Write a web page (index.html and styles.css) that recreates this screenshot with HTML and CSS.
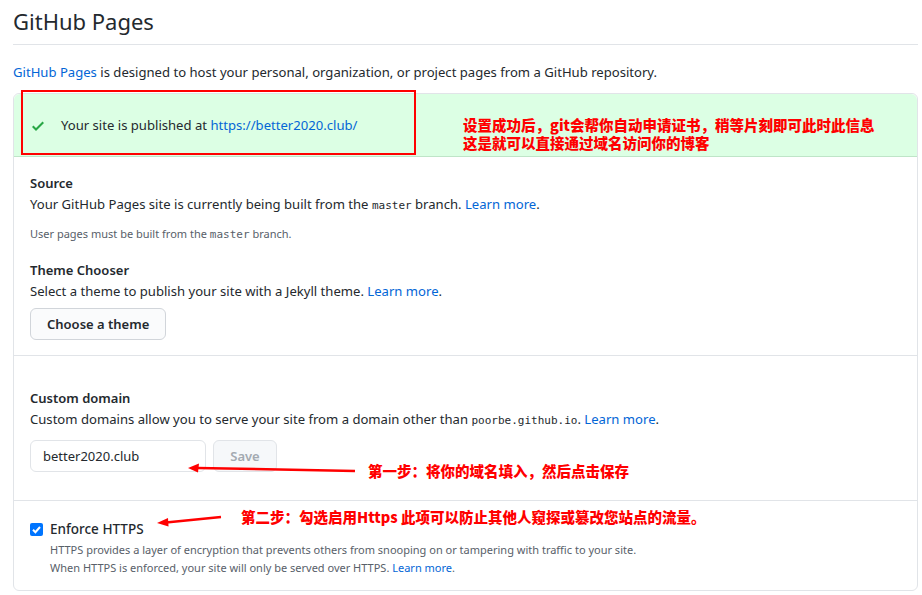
FILE: index.html
```html
<!DOCTYPE html>
<html lang="zh">
<head>
<meta charset="utf-8">
<title>GitHub Pages</title>
<link rel="stylesheet" href="styles.css">
</head>
<body>
<div class="page">
  <h2 class="title">GitHub Pages</h2>
  <p class="intro"><a href="#">GitHub Pages</a> is designed to host your personal, organization, or project pages from a GitHub repository.</p>

  <div class="box">
    <div class="flash">
      <svg class="check" width="12" height="16" viewBox="0 0 12 16"><path fill="#28a745" fill-rule="evenodd" d="M12 5l-8 8-4-4 1.5-1.5L4 10l6.5-6.5L12 5z"/></svg>
      <span>Your site is published at <a href="#">https://better2020.club/</a></span>
      <div class="redbox"></div>
      <div class="note note-flash">设置成功后，git会帮你自动申请证书，稍等片刻即可此时此信息<br>这是就可以直接通过域名访问你的博客</div>
    </div>

    <div class="section">
      <h4 class="sub">Source</h4>
      <p class="desc">Your GitHub Pages site is currently being built from the <code>master</code> branch. <a href="#">Learn more</a>.</p>
      <p class="small">User pages must be built from the <code>master</code> branch.</p>
      <h4 class="sub theme">Theme Chooser</h4>
      <p class="desc">Select a theme to publish your site with a Jekyll theme. <a href="#">Learn more</a>.</p>
      <button class="btn">Choose a theme</button>
    </div>

    <div class="section domain">
      <h4 class="sub">Custom domain</h4>
      <p class="desc">Custom domains allow you to serve your site from a domain other than <code>poorbe.github.io</code>. <a href="#">Learn more</a>.</p>
      <div class="row">
        <div class="input">better2020.club</div>
        <button class="btn save">Save</button>
      </div>
      <svg class="arrow arrow1" width="170" height="12" viewBox="0 0 170 12"><path d="M168 8 L10 5" stroke="#f00" stroke-width="2.5" fill="none"/><path d="M1 5 L12 0.5 L11 9.5 Z" fill="#f00"/></svg>
      <div class="note note1">第一步：将你的域名填入，然后点击保存</div>
    </div>

    <div class="section https">
      <div class="check-row">
        <span class="cb"><svg width="13" height="13" viewBox="0 0 13 13"><path d="M3 6.8 L5.4 9.2 L10 4" stroke="#fff" stroke-width="2" fill="none"/></svg></span>
        <span class="cb-label">Enforce HTTPS</span>
      </div>
      <p class="small hint">HTTPS provides a layer of encryption that prevents others from snooping on or tampering with traffic to your site.<br>When HTTPS is enforced, your site will only be served over HTTPS. <a href="#">Learn more</a>.</p>
      <svg class="arrow arrow2" width="66" height="12" viewBox="0 0 66 12"><path d="M64 2 L9 7.5" stroke="#f00" stroke-width="2.5" fill="none"/><path d="M0 8 L11 3 L11.5 11.5 Z" fill="#f00"/></svg>
      <div class="note note2">第二步：勾选启用Https 此项可以防止其他人窥探或篡改您站点的流量。</div>
    </div>
  </div>
</div>
</body>
</html>
```
FILE: styles.css
```css
* { box-sizing: border-box; }
html, body { margin: 0; padding: 0; background: #fff; }
body {
  font-family: "Noto Sans", "Open Sans", sans-serif;
  font-size: 13.1px;
  color: #24292e;
  overflow: hidden;
}
a { color: #0366d6; text-decoration: none; }
code { font-family: "DejaVu Sans Mono", "Liberation Mono", monospace; font-size: 11px; }
.page { padding: 0 4px 0 13px; width: 922px; }
.title {
  margin: 0;
  padding: 6px 0 8px;
  font-size: 22px;
  font-weight: 400;
  line-height: 30px;
  border-bottom: 1px solid #e1e4e8;
}
.intro { margin: 16px 0 10px; line-height: 22px; }
.box {
  border: 1px solid #e1e4e8;
  border-radius: 6px;
  width: 905px;
  height: 498px;
  position: relative;
}
.flash {
  position: relative;
  height: 63px;
  background: #dcffe4;
  border-bottom: 1px solid #bfe5c8;
  border-radius: 6px 6px 0 0;
  display: flex;
  align-items: center;
  padding-left: 18px;
}
.flash .check { margin-right: 17px; margin-top: 2px; }
.redbox {
  position: absolute;
  left: 7px; top: -4px;
  width: 395px; height: 65px;
  border: 2px solid #f00;
}
.note {
  position: absolute;
  color: #f00;
  font-family: "Noto Sans CJK SC", sans-serif;
  font-weight: 900;
  font-size: 14.5px;
  line-height: 18px;
  white-space: nowrap;
}
.note-flash { left: 449px; top: 22px; }
.section { padding: 16px 16px 15px; border-bottom: 1px solid #e1e4e8; position: relative; }
.sub { margin: 0; font-size: 13px; font-weight: 600; line-height: 20px; }
.desc { margin: 0; line-height: 22px; }
.small { margin: 8px 0 0; font-size: 11px; color: #586069; line-height: 18px; }
.theme { margin-top: 16px; }
.btn {
  margin-top: 6px;
  font-family: inherit;
  font-size: 13px;
  font-weight: 600;
  color: #24292e;
  background: #fafbfc;
  border: 1px solid #d1d5da;
  border-radius: 6px;
  height: 32px;
  padding: 0 16px;
}
.domain { padding-top: 32px; padding-bottom: 28px; }
.row { display: flex; gap: 7px; margin-top: 8px; }
.input {
  width: 176px; height: 32px;
  border: 1px solid #e1e4e8;
  border-radius: 6px;
  padding: 0 12px;
  line-height: 30px;
  font-size: 13px;
}
.save { margin-top: 0; width: 64px; padding: 0; color: #a3aab1; background: #f6f8fa; border-color: #e1e4e8; }
.arrow { position: absolute; }
.arrow1 { left: 173px; top: 107px; }
.note1 { left: 354px; top: 106px; }
.https { border-bottom: none; padding-top: 18px; }
.check-row { display: flex; align-items: center; }
.cb {
  width: 13px; height: 13px;
  background: #0075ff;
  border-radius: 2px;
  display: inline-flex;
  margin-right: 7px;
}
.cb svg { display: block; }
.cb-label { font-size: 13.5px; font-weight: 500; line-height: 20px; }
.hint { margin: 2px 0 0 20px; }
.arrow2 { left: 143px; top: 14px; }
.note2 { left: 227px; top: 7px; }
```
